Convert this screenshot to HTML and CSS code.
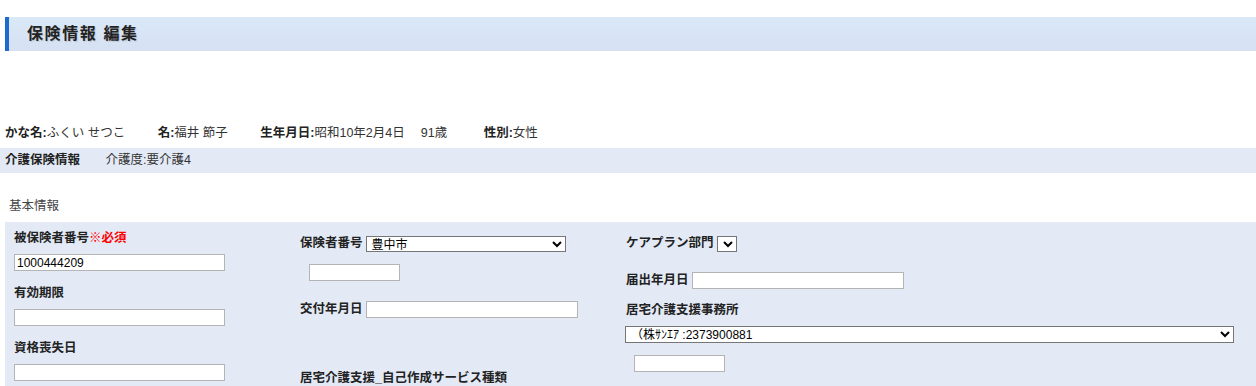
FILE: index.html
```html
<!DOCTYPE html>
<html lang="ja">

<head>
    <meta charset="UTF-8">
    <title>保険情報 編集</title>
    <link rel="stylesheet" href="styles.css">
</head>

<body>

    <h1 class="page-title">保険情報 編集</h1>

    <div class="person">
        <span class="item"><b>かな名:</b>ふくい せつこ</span>
        <span class="item"><b>名:</b>福井 節子</span>
        <span class="item"><b>生年月日:</b>昭和10年2月4日<span class="age">91歳</span></span>
        <span class="item gender"><b>性別:</b>女性</span>
    </div>

    <div class="care-bar">
        <b>介護保険情報</b>
        <span class="care-level">介護度:要介護4</span>
    </div>

    <div class="section-title">基本情報</div>

    <div class="panel">
        <div class="col col-1">
            <div class="label">被保険者番号<span class="required">※必須</span></div>
            <input type="text" class="field" value="1000444209">
            <div class="label">有効期限</div>
            <input type="text" class="field">
            <div class="label">資格喪失日</div>
            <input type="text" class="field">
        </div>

        <div class="col col-2">
            <div class="line first">
                <span class="label">保険者番号</span>
                <select class="select wide">
                    <option>豊中市</option>
                </select>
            </div>
            <input type="text" class="field small sub">
            <div class="line issued">
                <span class="label">交付年月日</span>
                <input type="text" class="field">
            </div>
            <div class="label service">居宅介護支援_自己作成サービス種類</div>
        </div>

        <div class="col col-3">
            <div class="line first">
                <span class="label">ケアプラン部門</span>
                <select class="select tiny">
                    <option></option>
                </select>
            </div>
            <div class="line notified">
                <span class="label">届出年月日</span>
                <input type="text" class="field">
            </div>
            <div class="label office">居宅介護支援事務所</div>
            <select class="select office-select">
                <option>（株ｻﾝｴｱ :2373900881</option>
            </select>
            <input type="text" class="field small sub">
        </div>
    </div>

</body>

</html>
```

FILE: styles.css
```css
body {
    margin: 0;
    font-family: "Liberation Sans", "Noto Sans CJK JP", sans-serif;
    font-size: 12.5px;
    color: #333;
    background-color: #fff;
}

.page-title {
    margin: 17px 0 0 5px;
    height: 34px;
    line-height: 34px;
    padding-left: 18px;
    border-left: 4px solid #1b6ccd;
    background: linear-gradient(#d9e9f8, #d6e0f2);
    font-size: 16px;
    letter-spacing: 1.6px;
    font-weight: bold;
    color: #222;
    text-shadow: 1px 1px 1px #b9c3d2;
}

.person {
    margin-top: 73px;
    padding-left: 5px;
    line-height: 18px;
    white-space: nowrap;
}

.person b {
    color: #222;
}

.item {
    margin-right: 29px;
}

.age {
    margin-left: 16px;
}

.gender {
    margin-left: 4px;
}

.care-bar {
    margin-top: 6px;
    height: 25px;
    line-height: 25px;
    padding-left: 5px;
    background-color: #e3eaf6;
}

.care-bar b {
    color: #222;
}

.care-level {
    margin-left: 22px;
}

.section-title {
    padding: 24px 0 0 9px;
    line-height: 18px;
    margin-bottom: 7px;
    color: #444;
}

.panel {
    display: grid;
    grid-template-columns: 286px 326px 1fr;
    margin-left: 5px;
    padding: 7px 0 0 9px;
    height: 157px;
    background-color: #e3eaf6;
}

.col {
    display: flex;
    flex-direction: column;
    align-items: flex-start;
}

.label {
    font-weight: bold;
    line-height: 18px;
    color: #222;
}

.required {
    color: #f00;
}

.field {
    box-sizing: border-box;
    width: 212px;
    height: 17px;
    margin: 0;
    padding: 0 2px;
    border: 1px solid #b4b4b4;
    background-color: #fff;
    font-family: "Liberation Sans", "Noto Sans CJK JP", sans-serif;
    font-size: 12px;
    color: #000;
}

.col-1 .field {
    width: 211px;
    margin: 7px 0 13px;
}

.line {
    display: flex;
    align-items: center;
    gap: 3px;
    height: 17px;
}

.line .label {
    line-height: 17px;
}

.first {
    margin-top: 6px;
}

.select {
    box-sizing: border-box;
    height: 16px;
    margin: 0;
    padding: 0 0 0 1px;
    border: 1px solid #767676;
    border-radius: 0;
    background-color: #fff;
    font-family: "Liberation Sans", "Noto Sans CJK JP", sans-serif;
    font-size: 12px;
    color: #000;
}

.wide {
    width: 200px;
}

.tiny {
    width: 20px;
}

.small {
    width: 91px;
}

.col-2 .sub {
    margin: 12px 0 0 9px;
}

.issued {
    margin-top: 20px;
}

.service {
    margin-top: 51px;
}

.notified {
    margin-top: 20px;
}

.office {
    margin-top: 12px;
}

.office-select {
    width: 609px;
    height: 17px;
    margin: 7px 0 0 -1px;
}

.col-3 .sub {
    margin: 12px 0 0 8px;
}
```
